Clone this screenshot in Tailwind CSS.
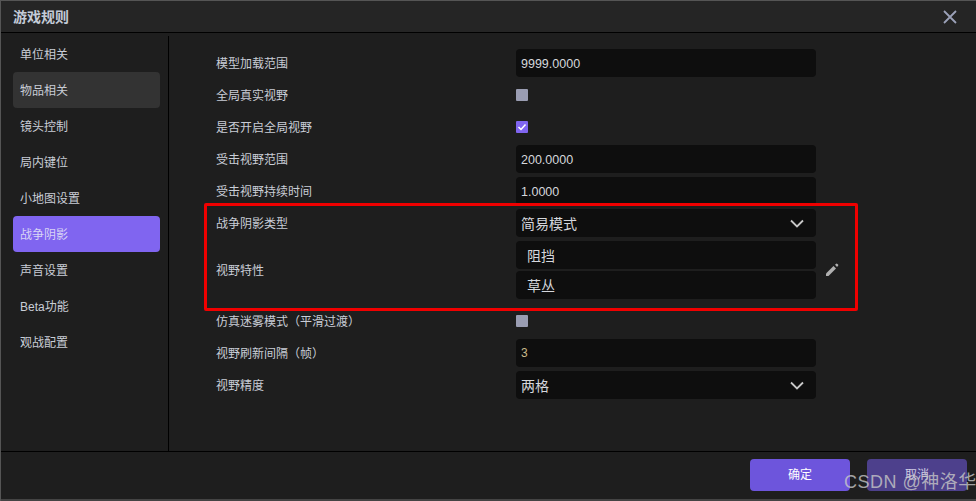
<!DOCTYPE html>
<html lang="zh">
<head>
<meta charset="utf-8">
<script src="https://cdn.jsdelivr.net/npm/@tailwindcss/browser@4"></script>
</head>
<body class="m-0 bg-[#1e1e1e]">
<div class="relative w-[976px] h-[501px] overflow-hidden flex flex-col bg-[#1e1e1e] border-t border-l border-[#555] text-[#c9cdd6] text-xs font-['Liberation_Sans','Noto_Sans_CJK_SC',sans-serif]">
  <header class="h-[32px] shrink-0 flex items-center justify-between pl-3 pr-[19px] bg-[#252525] border-b border-black">
    <span class="text-sm font-bold text-[#c4cbd8]">游戏规则</span>
    <svg class="w-[14px] h-[14px]" viewBox="0 0 14 14" fill="none" stroke="#9ba1b8" stroke-width="1.8"><path d="M1 1 13 13M13 1 1 13"/></svg>
  </header>
  <div class="flex-1 flex min-h-0 pt-[3px]">
    <nav class="w-[168px] shrink-0 border-r border-black pl-3 pr-2 flex flex-col">
      <div class="h-9 shrink-0 flex items-center pl-[7px] pt-[2px]">单位相关</div>
      <div class="h-9 shrink-0 flex items-center pl-[7px] pt-[2px] bg-[#333333] rounded">物品相关</div>
      <div class="h-9 shrink-0 flex items-center pl-[7px] pt-[2px]">镜头控制</div>
      <div class="h-9 shrink-0 flex items-center pl-[7px] pt-[2px]">局内键位</div>
      <div class="h-9 shrink-0 flex items-center pl-[7px] pt-[2px]">小地图设置</div>
      <div class="h-9 shrink-0 flex items-center pl-[7px] pt-[2px] bg-[#8065f0] rounded text-[#d8d4f5]">战争阴影</div>
      <div class="h-9 shrink-0 flex items-center pl-[7px] pt-[2px]">声音设置</div>
      <div class="h-9 shrink-0 flex items-center pl-[7px] pt-[2px]">Beta功能</div>
      <div class="h-9 shrink-0 flex items-center pl-[7px] pt-[2px]">观战配置</div>
    </nav>
    <main class="flex-1 pl-[47px] pt-[11px] flex flex-col">
      <div class="h-8 shrink-0 flex items-center"><span class="w-[300px] pt-[2px]">模型加载范围</span><div class="w-[300px] h-7 bg-[#0e0e0e] rounded-sm flex items-center pl-[5px] pt-[2px] text-[12.5px] text-[#d5d7dc]">9999.0000</div></div>
      <div class="h-8 shrink-0 flex items-center"><span class="w-[300px] pt-[2px]">全局真实视野</span><div class="w-3 h-3 bg-[#9a9db2] rounded-[1px]"></div></div>
      <div class="h-8 shrink-0 flex items-center"><span class="w-[300px] pt-[2px]">是否开启全局视野</span><div class="w-3 h-3 bg-[#8065f0] rounded-[1px] flex items-center justify-center"><svg class="w-3 h-3" viewBox="0 0 12 12" fill="none" stroke="#fff" stroke-width="1.5"><path d="M2.5 6 5 8.5 9.5 3.5"/></svg></div></div>
      <div class="h-8 shrink-0 flex items-center"><span class="w-[300px] pt-[2px]">受击视野范围</span><div class="w-[300px] h-7 bg-[#0e0e0e] rounded-sm flex items-center pl-[5px] pt-[2px] text-[12.5px] text-[#d5d7dc]">200.0000</div></div>
      <div class="h-8 shrink-0 flex items-center"><span class="w-[300px] pt-[2px]">受击视野持续时间</span><div class="w-[300px] h-7 bg-[#0e0e0e] rounded-sm flex items-center pl-[5px] pt-[2px] text-[12.5px] text-[#d5d7dc]">1.0000</div></div>
      <div class="h-8 shrink-0 flex items-center"><span class="w-[300px] pt-[2px]">战争阴影类型</span><div class="w-[300px] h-7 bg-[#0e0e0e] rounded-sm flex items-center justify-between pl-[5px] pr-[12px] text-sm text-[#d5d7dc]"><span class="pt-[2px]">简易模式</span><svg class="w-[14px] h-[9px]" viewBox="0 0 14 9" fill="none" stroke="#c8c8c8" stroke-width="1.8"><path d="M1 1.5 7 7.5 13 1.5"/></svg></div></div>
      <div class="h-[62px] mb-[4px] shrink-0 flex items-center"><span class="w-[300px] pt-[2px]">视野特性</span>
        <div class="w-[300px] flex flex-col gap-[2px]">
          <div class="h-7 bg-[#0e0e0e] rounded-sm flex items-center px-[11px] pt-[2px] text-sm text-[#d5d7dc]">阻挡</div>
          <div class="h-7 bg-[#0e0e0e] rounded-sm flex items-center px-[11px] pt-[2px] text-sm text-[#d5d7dc]">草丛</div>
        </div>
        <svg class="w-[14px] h-[14px] ml-[9px]" viewBox="0 0 14 14" fill="#b0b0b0"><path d="M1 13 1 10.5 8.5 3 11 5.5 3.5 13Z"/><path d="M10 1.8 11.2 .8Q11.8 .4 12.4 .9L13.1 1.6Q13.5 2.2 13.1 2.8L12 4Z"/></svg>
      </div>
      <div class="h-8 shrink-0 flex items-center"><span class="w-[300px] pt-[2px]">仿真迷雾模式（平滑过渡）</span><div class="w-3 h-3 bg-[#9a9db2] rounded-[1px]"></div></div>
      <div class="h-8 shrink-0 flex items-center"><span class="w-[300px] pt-[2px]">视野刷新间隔（帧）</span><div class="w-[300px] h-7 bg-[#0e0e0e] rounded-sm flex items-center pl-[5px] text-xs text-[#c9b98a]">3</div></div>
      <div class="h-8 shrink-0 flex items-center"><span class="w-[300px] pt-[2px]">视野精度</span><div class="w-[300px] h-7 bg-[#0e0e0e] rounded-sm flex items-center justify-between pl-[5px] pr-[12px] text-sm text-[#d5d7dc]"><span class="pt-[2px]">两格</span><svg class="w-[14px] h-[9px]" viewBox="0 0 14 9" fill="none" stroke="#c8c8c8" stroke-width="1.8"><path d="M1 1.5 7 7.5 13 1.5"/></svg></div></div>
    </main>
  </div>
  <footer class="h-[50px] shrink-0 border-t border-black flex justify-end gap-[17px] pt-[7px] pr-[9px] bg-[#1e1e1e] border-b-2 border-b-[#444]">
    <div class="w-[100px] h-8 bg-[#6d55dc] rounded-sm flex items-center justify-center text-white">确定</div>
    <div class="w-[100px] h-8 bg-[#4d408c] rounded-sm flex items-center justify-center text-[#cfcbe3]">取消</div>
  </footer>
  <div class="absolute left-[203px] top-[202px] w-[654px] h-[108px] border-[3px] border-[#f00000] rounded-[2px]"></div>
  <div class="absolute left-[843px] top-[469px] whitespace-nowrap text-[18px] leading-[24px] text-[#c8c8c8]/80 tracking-[0.5px]">CSDN @神洛华</div>
</div>
</body>
</html>
